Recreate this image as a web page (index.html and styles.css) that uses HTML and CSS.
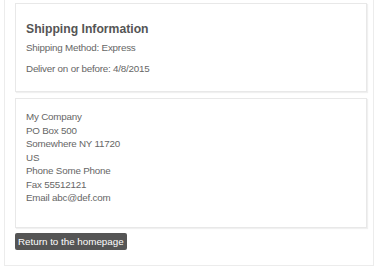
FILE: index.html
```html
<!DOCTYPE html>
<html lang="en">
<head>
  <meta charset="UTF-8">
  <meta name="viewport" content="width=device-width, initial-scale=1.0">
  <title>Order</title>
  <link rel="stylesheet" href="styles.css">
</head>
<body>
  <div id="page">
    <div class="panel" id="shipping">
      <h2>Shipping Information</h2>
      <p>Shipping Method: Express</p>
      <p>Deliver on or before: 4/8/2015</p>
    </div>
    <div class="panel" id="address">
      <p>My Company</p>
      <p>PO Box 500</p>
      <p>Somewhere NY 11720</p>
      <p>US</p>
      <p>Phone Some Phone</p>
      <p>Fax 55512121</p>
      <p>Email abc@def.com</p>
    </div>
    <button id="home">Return to the homepage</button>
  </div>
</body>
</html>
```
FILE: styles.css
```css
body{
  margin: 0;
  background-color: white;
  font-family: "Liberation Sans", Arial, sans-serif;
  color: #666;
}
#page{
  width: 352px;
  margin-left: 4px;
  padding: 3px 6px 15px 10px;
  border: 1px solid #ececec;
  border-top: none;
  display: flex;
  flex-direction: column;
  align-items: flex-start;
  gap: 6px;
}
.panel{
  align-self: stretch;
  border: 1px solid #e8e8e8;
  box-shadow: 1px 1px 1px #f0f0f0;
  padding: 0 10px;
}
p{
  margin: 0;
  font-size: 9.8px;
  letter-spacing: -0.2px;
}
/* 배송 정보 */
#shipping{
  height: 89px;
  box-sizing: border-box;
  padding-top: 18px;
}
h2{
  margin: 0 0 2px 0;
  font-size: 12.2px;
  color: #555;
}
#shipping p{
  line-height: 20.5px;
}
/* 주소 */
#address{
  height: 130px;
  box-sizing: border-box;
  padding-top: 11px;
}
#address p{
  line-height: 13.5px;
}
#home{
  margin-top: -1px;
  background-color: #555;
  color: white;
  border: none;
  border-radius: 2px;
  font-family: "Liberation Sans", Arial, sans-serif;
  font-size: 9.8px;
  height: 17px;
  padding: 0 3px;
}
```
